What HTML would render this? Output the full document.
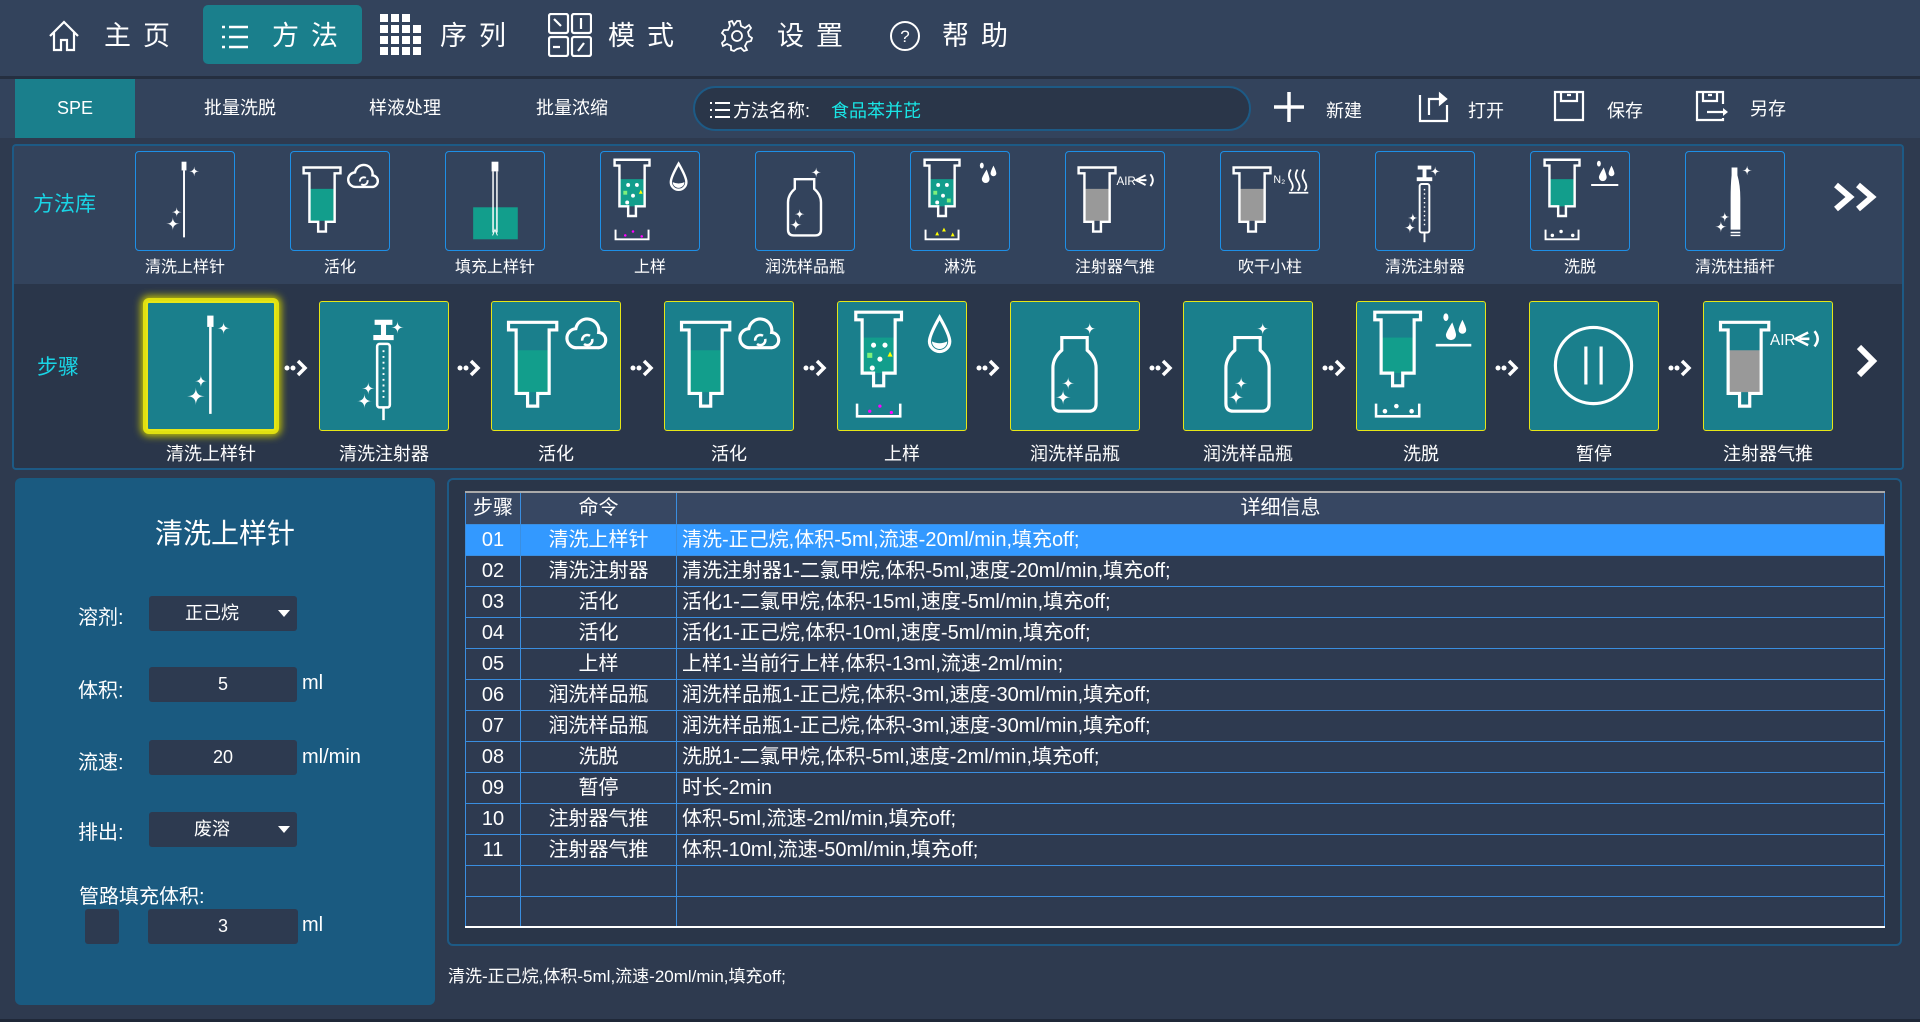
<!DOCTYPE html>
<html><head><meta charset="utf-8">
<style>
*{margin:0;padding:0;box-sizing:border-box}
body{width:1920px;height:1022px;background:#2e3a4f;font-family:"Liberation Sans","Noto Sans CJK SC",sans-serif;color:#fff;position:relative;overflow:hidden}
.a{position:absolute}
.nav{left:0;top:0;width:1920px;height:76px;background:#33435c}
.nt{position:absolute;top:18px;font-size:27px;letter-spacing:12px;line-height:36px}
.bar2{left:0;top:76px;width:1920px;height:62px;background:#33435c;border-top:3px solid #252f40}
.tab{position:absolute;top:0;height:59px;line-height:59px;font-size:18px;text-align:center}
.lib{left:12px;top:144px;width:1892px;height:140px;background:#33435c;border:2px solid #1d5a85;border-bottom:none;border-radius:4px 4px 0 0}
.steps{left:12px;top:284px;width:1892px;height:186px;background:#2a364a;border:2px solid #1d5a85;border-top:none;border-radius:0 0 4px 4px}
.lc{position:absolute;top:151px;width:100px;height:100px;border:1.5px solid #1e8fe6;border-radius:4px;background:#33435c}
.ll{position:absolute;top:253px;width:140px;text-align:center;font-size:16px}
.sc{position:absolute;top:301px;width:130px;height:130px;border:1.5px solid #e6e617;border-radius:3px;background:#1a7f8c}
.sl{position:absolute;top:440px;width:170px;text-align:center;font-size:18px}
.ar{position:absolute;top:356px;width:26px;height:24px}
svg{display:block}
.left{left:15px;top:478px;width:420px;height:527px;background:#1a5a80;border-radius:6px}
.lab{position:absolute;font-size:20px;left:78px}
.inp{position:absolute;background:#2d3a50;border-radius:3px;font-size:18px;text-align:center;line-height:35px;height:35px}
.right{left:447px;top:478px;width:1455px;height:468px;border:2px solid #1d5a85;border-radius:6px;background:#2a3649}
table{position:absolute;left:465px;top:491px;width:1420px;border-collapse:collapse;font-size:20px;background:#2e3a50;border-top:2px solid #aaa;border-bottom:2px solid #fff}
td{height:31px;border:1.5px solid #3a8ee0;padding:0 5px;white-space:nowrap;line-height:28px}
tr.h td{background:#374762;height:32px}
tr.sel td{background:#3399ff}
td.c{text-align:center}
</style></head><body>
<svg width="0" height="0" style="position:absolute">
<defs>
<symbol id="needle" viewBox="0 0 100 100"><rect x="47" y="10" width="5" height="9" fill="#fff"/><line x1="49.5" y1="19" x2="49.5" y2="88" stroke="#fff" stroke-width="2"/><path fill="#fff" d="M60,15 Q60,20 65,20 Q60,20 60,25 Q60,20 55,20 Q60,20 60,15Z M42,57 Q42,62 47,62 Q42,62 42,67 Q42,62 37,62 Q42,62 42,57Z M38,67 Q38,74 45,74 Q38,74 38,81 Q38,74 31,74 Q38,74 38,67Z"/></symbol>
<symbol id="syr" viewBox="0 0 100 100"><path d="M43,16 H57 M50,16 V26 M42,28 H58" stroke="#fff" stroke-width="4" fill="none"/><rect x="45" y="33" width="10" height="50" rx="2" stroke="#fff" stroke-width="2" fill="none"/><path d="M50,38 V78" stroke="#fff" stroke-width="1.5" stroke-dasharray="1.5,3"/><line x1="50" y1="83" x2="50" y2="93" stroke="#fff" stroke-width="2"/><path fill="#fff" d="M61,15 Q61,20 66,20 Q61,20 61,25 Q61,20 56,20 Q61,20 61,15Z M38,63 Q38,68 43,68 Q38,68 38,73 Q38,68 33,68 Q38,68 38,63Z M35,72 Q35,78 41,78 Q35,78 35,84 Q35,78 29,78 Q35,78 35,72Z"/></symbol>
<symbol id="act" viewBox="0 0 100 100"><rect x="20" y="38" width="24" height="33" fill="#129e8c"/><path d="M13,16 H51 V22 H45 V72 H36 V82 H28 V72 H19 V22 H13 Z" stroke="#fff" stroke-width="2.5" fill="none"/><path d="M67,36 H83 A6,6 0 0 0 84,24 A9,9 0 0 0 66,21 A7.5,7.5 0 0 0 67,36 Z" stroke="#fff" stroke-width="2.5" fill="none"/><circle cx="75" cy="30" r="4" stroke="#fff" stroke-width="2" fill="none" stroke-dasharray="9,3"/></symbol>
<symbol id="fill" viewBox="0 0 100 100"><rect x="28" y="57" width="46" height="33" fill="#129e8c"/><rect x="47" y="10" width="7" height="10" fill="#fff"/><path d="M48.5,20 V83 M52.5,20 V83" stroke="#fff" stroke-width="1.5"/><path d="M48,86 L50.5,80 L53,86" stroke="#fff" fill="none" stroke-width="1"/></symbol>
<symbol id="load" viewBox="0 0 100 100"><rect x="20" y="28" width="24" height="28" fill="#129e8c"/><circle cx="28" cy="34" r="2" fill="#fff"/><circle cx="37" cy="34" r="2" fill="#fff"/><circle cx="33" cy="45" r="2" fill="#fff"/><circle cx="27" cy="52" r="2" fill="#fff"/><rect x="23" y="40" width="4" height="4" fill="#7cf07c"/><path d="M39,43 L41,39 L43,43Z" fill="#ff0"/><path d="M14,8 H50 V14 H45 V56 H36 V66 H28 V56 H19 V14 H14 Z" stroke="#fff" stroke-width="2.5" fill="none"/><path d="M15,80 V90 H49 V80" stroke="#fff" stroke-width="2" fill="none"/><circle cx="33" cy="82" r="1.3" fill="#f0f"/><circle cx="25" cy="86" r="1.3" fill="#f0f"/><circle cx="42" cy="87" r="1.3" fill="#f0f"/><path d="M80,12 Q72,26 72,31 A8,8 0 0 0 88,31 Q88,26 80,12 Z" stroke="#fff" stroke-width="2.5" fill="none"/><path d="M74,31 Q80,34 86,31 A6,6 0 0 1 74,31Z" fill="#fff"/></symbol>
<symbol id="bottle" viewBox="0 0 100 100"><path d="M40,28 H60 V38 Q67,44 67,52 V80 Q67,86 61,86 H39 Q33,86 33,80 V52 Q33,44 40,38 Z" stroke="#fff" stroke-width="2.5" fill="none"/><path fill="#fff" d="M62,16 Q62,21 67,21 Q62,21 62,26 Q62,21 57,21 Q62,21 62,16Z M45,59 Q45,64 50,64 Q45,64 45,69 Q45,64 40,64 Q45,64 45,59Z M41,69 Q41,75 47,75 Q41,75 41,81 Q41,75 35,75 Q41,75 41,69Z"/></symbol>
<symbol id="rinse" viewBox="0 0 100 100"><rect x="20" y="28" width="24" height="28" fill="#129e8c"/><circle cx="28" cy="34" r="2" fill="#fff"/><circle cx="37" cy="34" r="2" fill="#fff"/><circle cx="33" cy="45" r="2" fill="#fff"/><circle cx="27" cy="52" r="2" fill="#fff"/><rect x="23" y="40" width="4" height="4" fill="#7cf07c"/><rect x="37" y="48" width="4" height="4" fill="#7cf07c"/><path d="M14,8 H50 V14 H45 V56 H36 V66 H28 V56 H19 V14 H14 Z" stroke="#fff" stroke-width="2.5" fill="none"/><path d="M15,80 V90 H49 V80" stroke="#fff" stroke-width="2" fill="none"/><path d="M25,86 L27,82 L29,86Z M32,82 L34,78 L36,82Z M41,87 L43,83 L45,87Z" fill="#ff0"/><ellipse cx="73" cy="14" rx="2" ry="3" fill="#fff"/><path d="M78,18 Q73,26 73,28 A4,4 0 0 0 81,28 Q81,26 78,18Z M85,14 Q82,20 82,22 A3,3 0 0 0 88,22 Q88,20 85,14Z" fill="#fff"/></symbol>
<symbol id="air" viewBox="0 0 100 100"><rect x="20" y="38" width="24" height="33" fill="#999"/><path d="M13,16 H51 V22 H45 V72 H36 V82 H28 V72 H19 V22 H13 Z" stroke="#fff" stroke-width="2.5" fill="none"/><text x="52" y="34" font-size="12" fill="#fff" font-family="Liberation Sans,sans-serif">AIR</text><path d="M82,24 L72,29 L82,34 M75,29 H83 M87,23 Q92,29 87,35" stroke="#fff" stroke-width="2" fill="none"/></symbol>
<symbol id="n2" viewBox="0 0 100 100"><rect x="20" y="38" width="24" height="33" fill="#999"/><path d="M13,16 H51 V22 H45 V72 H36 V82 H28 V72 H19 V22 H13 Z" stroke="#fff" stroke-width="2.5" fill="none"/><text x="54" y="32" font-size="11" fill="#fff" font-family="Liberation Sans,sans-serif">N₂</text><path d="M72,18 Q68,24 72,30 Q76,36 72,40 M79,18 Q75,24 79,30 Q83,36 79,40 M86,18 Q82,24 86,30 Q90,36 86,40 M70,42 H90" stroke="#fff" stroke-width="1.8" fill="none"/></symbol>
<symbol id="elute" viewBox="0 0 100 100"><rect x="20" y="28" width="24" height="28" fill="#129e8c"/><path d="M14,8 H50 V14 H45 V56 H36 V66 H28 V56 H19 V14 H14 Z" stroke="#fff" stroke-width="2.5" fill="none"/><path d="M15,80 V90 H49 V80" stroke="#fff" stroke-width="2" fill="none"/><circle cx="22" cy="86" r="1.8" fill="#fff"/><circle cx="31" cy="82" r="1.8" fill="#fff"/><circle cx="43" cy="86" r="1.8" fill="#fff"/><ellipse cx="70" cy="12" rx="2" ry="3" fill="#fff"/><path d="M75,16 Q70,24 70,26 A4,4 0 0 0 78,26 Q78,24 75,16Z M83,14 Q80,20 80,22 A3,3 0 0 0 86,22 Q86,20 83,14Z" fill="#fff"/><line x1="62" y1="34" x2="90" y2="34" stroke="#fff" stroke-width="2"/></symbol>
<symbol id="rod" viewBox="0 0 100 100"><path d="M47,16 H53 V24 Q56,34 56,48 V80 H46 V48 Q46,34 47,24Z" fill="#fff"/><path d="M46,83 H56 M46,86 H56" stroke="#fff" stroke-width="1.5"/><path fill="#fff" d="M63,14 Q63,19 68,19 Q63,19 63,24 Q63,19 58,19 Q63,19 63,14Z M40,62 Q40,67 45,67 Q40,67 40,72 Q40,67 35,67 Q40,67 40,62Z M36,71 Q36,77 42,77 Q36,77 36,83 Q36,77 30,77 Q36,77 36,71Z"/></symbol>
<symbol id="pause" viewBox="0 0 100 100"><circle cx="50" cy="50" r="30" stroke="#fff" stroke-width="2.5" fill="none"/><path d="M44,35 V65 M56,35 V65" stroke="#fff" stroke-width="2.5"/></symbol>
<symbol id="arr" viewBox="0 0 26 24"><circle cx="3" cy="12" r="2.5" fill="#fff"/><circle cx="9" cy="12" r="2.5" fill="#fff"/><path d="M14,5 L21,12 L14,19" stroke="#fff" stroke-width="3.5" fill="none"/></symbol>
</defs></svg>

<div class="a nav">
 <svg class="a" style="left:46px;top:18px" width="36" height="36" viewBox="0 0 36 36"><path d="M4,18 L18,4 L32,18 M8,14 V32 H15 V22 H21 V32 H28 V14" stroke="#fff" stroke-width="2.2" fill="none"/></svg>
 <div class="nt" style="left:104px">主页</div>
 <div class="a" style="left:203px;top:5px;width:159px;height:59px;background:#1a7f8c;border-radius:5px"></div>
 <svg class="a" style="left:220px;top:24px" width="30" height="26" viewBox="0 0 30 26"><path d="M2,3 H5 M2,13 H5 M2,23 H5 M9,3 H28 M9,13 H28 M9,23 H28" stroke="#fff" stroke-width="2.5"/></svg>
 <div class="nt" style="left:272px">方法</div>
 <svg class="a" style="left:380px;top:14px" width="42" height="42" viewBox="0 0 42 42"><g fill="#fff"><rect x="0" y="0" width="8" height="8"/><rect x="11" y="0" width="8" height="8"/><rect x="22" y="0" width="8" height="8"/><rect x="0" y="11" width="8" height="8"/><rect x="11" y="11" width="8" height="8"/><rect x="22" y="11" width="8" height="8"/><rect x="33" y="11" width="8" height="8"/><rect x="0" y="22" width="8" height="8"/><rect x="11" y="22" width="8" height="8"/><rect x="22" y="22" width="8" height="8"/><rect x="33" y="22" width="8" height="8"/><rect x="0" y="33" width="8" height="8"/><rect x="11" y="33" width="8" height="8"/><rect x="22" y="33" width="8" height="8"/><rect x="33" y="33" width="8" height="8"/></g></svg>
 <div class="nt" style="left:440px">序列</div>
 <svg class="a" style="left:548px;top:13px" width="44" height="44" viewBox="0 0 44 44"><g stroke="#fff" stroke-width="2.2" fill="none"><rect x="1" y="1" width="19" height="19" rx="2"/><rect x="24" y="1" width="19" height="19" rx="2"/><rect x="1" y="24" width="19" height="19" rx="2"/><rect x="24" y="24" width="19" height="19" rx="2"/><path d="M6,6 L13,13 M33,5 V16 M5,34 H12 M36,30 L30,38"/></g></svg>
 <div class="nt" style="left:608px">模式</div>
 <svg class="a" style="left:720px;top:19px" width="34" height="34" viewBox="0 0 34 34"><path d="M17,2 L20,2 L21,7 L25,9 L29,6 L31,9 L28,13 L29,17 L32,19 L31,22 L27,23 L25,27 L27,31 L24,32 L21,29 L17,30 L14,32 L11,31 L11,27 L7,25 L3,27 L2,24 L5,21 L5,17 L2,14 L4,11 L8,11 L10,7 L9,3 L12,2 L14,6 Z" stroke="#fff" stroke-width="1.8" fill="none"/><circle cx="17" cy="17" r="5" stroke="#fff" stroke-width="1.8" fill="none"/></svg>
 <div class="nt" style="left:777px">设置</div>
 <svg class="a" style="left:889px;top:20px" width="32" height="32" viewBox="0 0 32 32"><circle cx="16" cy="16" r="14" stroke="#fff" stroke-width="2" fill="none"/><text x="16" y="22" text-anchor="middle" font-size="17" fill="#fff" font-family="Liberation Sans,sans-serif">?</text></svg>
 <div class="nt" style="left:942px">帮助</div>
</div>

<div class="a bar2">
 <div class="tab" style="left:15px;width:120px;background:#1a7f8c">SPE</div>
 <div class="tab" style="left:180px;width:120px">批量洗脱</div>
 <div class="tab" style="left:345px;width:120px">样液处理</div>
 <div class="tab" style="left:512px;width:120px">批量浓缩</div>
 <div class="a" style="left:693px;top:7px;width:558px;height:45px;border:2px solid #1d5a85;border-radius:23px;background:#2a3649"></div>
 <svg class="a" style="left:709px;top:22px" width="22" height="18" viewBox="0 0 22 18"><path d="M1,2 H3 M1,9 H3 M1,16 H3 M6,2 H21 M6,9 H21 M6,16 H21" stroke="#fff" stroke-width="2"/></svg>
 <div class="a" style="left:733px;top:18px;font-size:18px">方法名称:</div>
 <div class="a" style="left:831px;top:18px;font-size:18px;color:#19e6e6">食品苯并芘</div>
 <svg class="a" style="left:1273px;top:12px" width="32" height="32" viewBox="0 0 32 32"><path d="M16,1 V31 M1,16 H31" stroke="#fff" stroke-width="3.5"/></svg>
 <div class="a" style="left:1326px;top:18px;font-size:18px">新建</div>
 <svg class="a" style="left:1418px;top:12px" width="32" height="32" viewBox="0 0 32 32"><path d="M2,4 V30 H29 V14 M11,24 V8 H26 M22,3 L28,8 L22,13Z" stroke="#fff" stroke-width="2.2" fill="none"/><path d="M23,4 L28,8 L23,12Z" fill="#fff"/></svg>
 <div class="a" style="left:1468px;top:18px;font-size:18px">打开</div>
 <svg class="a" style="left:1553px;top:11px" width="32" height="32" viewBox="0 0 32 32"><path d="M2,2 H30 V30 H2 Z M8,2 V11 H24 V2 M14,5 H18" stroke="#fff" stroke-width="2.2" fill="none"/></svg>
 <div class="a" style="left:1607px;top:18px;font-size:18px">保存</div>
 <svg class="a" style="left:1695px;top:11px" width="34" height="32" viewBox="0 0 34 32"><path d="M28,14 V2 H2 V30 H28 V28 M8,2 V11 H22 V2 M13,5 H17 M12,22 H30" stroke="#fff" stroke-width="2.2" fill="none"/><path d="M28,18 L33,22 L28,26Z" fill="#fff"/></svg>
 <div class="a" style="left:1750px;top:16px;font-size:18px">另存</div>
</div>

<div class="a lib"></div>
<div class="a" style="left:33px;top:188px;font-size:21px;color:#19d5e6">方法库</div>
<div class="a steps"></div>
<div class="a" style="left:37px;top:351px;font-size:21px;color:#19d5e6">步骤</div>

<div class="lc" style="left:135px"><svg width="97" height="97"><use href="#needle"/></svg></div><div class="ll" style="left:115px">清洗上样针</div>
<div class="lc" style="left:290px"><svg width="97" height="97"><use href="#act"/></svg></div><div class="ll" style="left:270px">活化</div>
<div class="lc" style="left:445px"><svg width="97" height="97"><use href="#fill"/></svg></div><div class="ll" style="left:425px">填充上样针</div>
<div class="lc" style="left:600px"><svg width="97" height="97"><use href="#load"/></svg></div><div class="ll" style="left:580px">上样</div>
<div class="lc" style="left:755px"><svg width="97" height="97"><use href="#bottle"/></svg></div><div class="ll" style="left:735px">润洗样品瓶</div>
<div class="lc" style="left:910px"><svg width="97" height="97"><use href="#rinse"/></svg></div><div class="ll" style="left:890px">淋洗</div>
<div class="lc" style="left:1065px"><svg width="97" height="97"><use href="#air"/></svg></div><div class="ll" style="left:1045px">注射器气推</div>
<div class="lc" style="left:1220px"><svg width="97" height="97"><use href="#n2"/></svg></div><div class="ll" style="left:1200px">吹干小柱</div>
<div class="lc" style="left:1375px"><svg width="97" height="97"><use href="#syr"/></svg></div><div class="ll" style="left:1355px">清洗注射器</div>
<div class="lc" style="left:1530px"><svg width="97" height="97"><use href="#elute"/></svg></div><div class="ll" style="left:1510px">洗脱</div>
<div class="lc" style="left:1685px"><svg width="97" height="97"><use href="#rod"/></svg></div><div class="ll" style="left:1665px">清洗柱插杆</div>
<svg class="a" style="left:1833px;top:182px" width="50" height="30" viewBox="0 0 50 30"><path d="M3,3 L17,15 L3,27 M25,3 L39,15 L25,27" stroke="#fff" stroke-width="6" fill="none"/></svg>

<div class="sc" style="left:146px;border:2px solid #e6e617;box-shadow:0 0 0 3px #e0e010,0 0 8px 5px #c8c800"><svg width="126" height="126"><use href="#needle"/></svg></div><div class="sl" style="left:126px">清洗上样针</div>
<div class="ar" style="left:284px"><svg width="26" height="24"><use href="#arr"/></svg></div>
<div class="sc" style="left:319px"><svg width="127" height="127"><use href="#syr"/></svg></div><div class="sl" style="left:299px">清洗注射器</div>
<div class="ar" style="left:457px"><svg width="26" height="24"><use href="#arr"/></svg></div>
<div class="sc" style="left:491px"><svg width="127" height="127"><use href="#act"/></svg></div><div class="sl" style="left:471px">活化</div>
<div class="ar" style="left:630px"><svg width="26" height="24"><use href="#arr"/></svg></div>
<div class="sc" style="left:664px"><svg width="127" height="127"><use href="#act"/></svg></div><div class="sl" style="left:644px">活化</div>
<div class="ar" style="left:803px"><svg width="26" height="24"><use href="#arr"/></svg></div>
<div class="sc" style="left:837px"><svg width="127" height="127"><use href="#load"/></svg></div><div class="sl" style="left:817px">上样</div>
<div class="ar" style="left:976px"><svg width="26" height="24"><use href="#arr"/></svg></div>
<div class="sc" style="left:1010px"><svg width="127" height="127"><use href="#bottle"/></svg></div><div class="sl" style="left:990px">润洗样品瓶</div>
<div class="ar" style="left:1149px"><svg width="26" height="24"><use href="#arr"/></svg></div>
<div class="sc" style="left:1183px"><svg width="127" height="127"><use href="#bottle"/></svg></div><div class="sl" style="left:1163px">润洗样品瓶</div>
<div class="ar" style="left:1322px"><svg width="26" height="24"><use href="#arr"/></svg></div>
<div class="sc" style="left:1356px"><svg width="127" height="127"><use href="#elute"/></svg></div><div class="sl" style="left:1336px">洗脱</div>
<div class="ar" style="left:1495px"><svg width="26" height="24"><use href="#arr"/></svg></div>
<div class="sc" style="left:1529px"><svg width="127" height="127"><use href="#pause"/></svg></div><div class="sl" style="left:1509px">暂停</div>
<div class="ar" style="left:1668px"><svg width="26" height="24"><use href="#arr"/></svg></div>
<div class="sc" style="left:1703px"><svg width="127" height="127"><use href="#air"/></svg></div><div class="sl" style="left:1683px">注射器气推</div>
<svg class="a" style="left:1855px;top:344px" width="24" height="34" viewBox="0 0 24 34"><path d="M4,3 L18,17 L4,31" stroke="#fff" stroke-width="6" fill="none"/></svg>

<div class="a left"></div>
<div class="a" style="left:15px;top:512px;width:420px;text-align:center;font-size:28px">清洗上样针</div>
<div class="lab" style="top:601px">溶剂:</div>
<div class="inp" style="left:149px;top:596px;width:148px;padding-right:22px">正己烷</div>
<div class="a" style="left:278px;top:610px;width:0;height:0;border-left:6px solid transparent;border-right:6px solid transparent;border-top:7px solid #fff"></div>
<div class="lab" style="top:674px">体积:</div>
<div class="inp" style="left:149px;top:667px;width:148px">5</div>
<div class="a" style="left:302px;top:672px;font-size:20px">ml</div>
<div class="lab" style="top:746px">流速:</div>
<div class="inp" style="left:149px;top:740px;width:148px">20</div>
<div class="a" style="left:302px;top:746px;font-size:20px">ml/min</div>
<div class="lab" style="top:816px">排出:</div>
<div class="inp" style="left:149px;top:812px;width:148px;padding-right:22px">废溶</div>
<div class="a" style="left:278px;top:826px;width:0;height:0;border-left:6px solid transparent;border-right:6px solid transparent;border-top:7px solid #fff"></div>
<div class="lab" style="top:880px;left:79px">管路填充体积:</div>
<div class="inp" style="left:85px;top:909px;width:34px"></div>
<div class="inp" style="left:148px;top:909px;width:150px">3</div>
<div class="a" style="left:302px;top:914px;font-size:20px">ml</div>

<div class="a right"></div>
<table>
<colgroup><col style="width:55px"><col style="width:156px"><col></colgroup>
<tr class="h"><td class="c">步骤</td><td class="c">命令</td><td class="c">详细信息</td></tr>
<tr class="sel"><td class="c">01</td><td class="c">清洗上样针</td><td>清洗-正己烷,体积-5ml,流速-20ml/min,填充off;</td></tr>
<tr><td class="c">02</td><td class="c">清洗注射器</td><td>清洗注射器1-二氯甲烷,体积-5ml,速度-20ml/min,填充off;</td></tr>
<tr><td class="c">03</td><td class="c">活化</td><td>活化1-二氯甲烷,体积-15ml,速度-5ml/min,填充off;</td></tr>
<tr><td class="c">04</td><td class="c">活化</td><td>活化1-正己烷,体积-10ml,速度-5ml/min,填充off;</td></tr>
<tr><td class="c">05</td><td class="c">上样</td><td>上样1-当前行上样,体积-13ml,流速-2ml/min;</td></tr>
<tr><td class="c">06</td><td class="c">润洗样品瓶</td><td>润洗样品瓶1-正己烷,体积-3ml,速度-30ml/min,填充off;</td></tr>
<tr><td class="c">07</td><td class="c">润洗样品瓶</td><td>润洗样品瓶1-正己烷,体积-3ml,速度-30ml/min,填充off;</td></tr>
<tr><td class="c">08</td><td class="c">洗脱</td><td>洗脱1-二氯甲烷,体积-5ml,速度-2ml/min,填充off;</td></tr>
<tr><td class="c">09</td><td class="c">暂停</td><td>时长-2min</td></tr>
<tr><td class="c">10</td><td class="c">注射器气推</td><td>体积-5ml,流速-2ml/min,填充off;</td></tr>
<tr><td class="c">11</td><td class="c">注射器气推</td><td>体积-10ml,流速-50ml/min,填充off;</td></tr>
<tr><td></td><td></td><td></td></tr>
<tr><td></td><td></td><td></td></tr>
</table>
<div class="a" style="left:448px;top:962px;font-size:17px">清洗-正己烷,体积-5ml,流速-20ml/min,填充off;</div>
<div class="a" style="left:0;top:1019px;width:1920px;height:3px;background:#1f2838"></div>
</body></html>
